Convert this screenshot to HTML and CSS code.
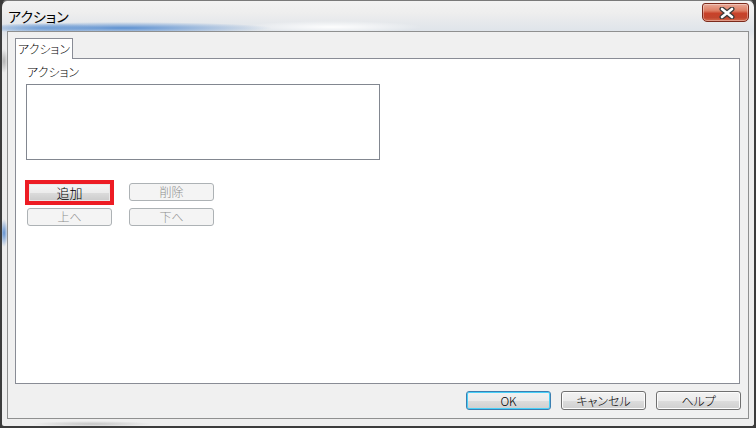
FILE: index.html
```html
<!DOCTYPE html>
<html lang="ja">
<head>
<meta charset="utf-8">
<title>アクション</title>
<link rel="stylesheet" href="styles.css">
</head>
<body>
<div class="window">
  <div class="titlebar">
    <span class="title">アクション</span>
    <button class="close" aria-label="閉じる">
      <svg width="16" height="12" viewBox="0 0 16 12">
        <path d="M3 2 L13 10 M13 2 L3 10" stroke="#3a3a3a" stroke-width="5" stroke-linecap="round" fill="none"/>
        <path d="M3 2 L13 10 M13 2 L3 10" stroke="#ffffff" stroke-width="2.6" stroke-linecap="round" fill="none"/>
      </svg>
    </button>
  </div>
  <div class="client">
    <div class="tabs"><div class="tab">アクション</div></div>
    <div class="panel">
      <div class="label">アクション</div>
      <div class="listbox"></div>
      <div class="row row-first">
        <div class="highlight"><button class="hbtn">追加</button></div>
        <button class="btn disabled gap-first">削除</button>
      </div>
      <div class="row row-second">
        <button class="btn disabled shift">上へ</button>
        <button class="btn disabled gap-second">下へ</button>
      </div>
    </div>
    <div class="footer">
      <button class="btn enabled default">OK</button>
      <button class="btn enabled">キャンセル</button>
      <button class="btn enabled">ヘルプ</button>
    </div>
  </div>
</div>
</body>
</html>
```

FILE: styles.css
```css
* { box-sizing: border-box; }
html, body { margin: 0; padding: 0; }
body {
  width: 756px;
  height: 428px;
  overflow: hidden;
  background: #3a3a3a;
  font-family: "Noto Sans CJK JP", "Noto Sans", sans-serif;
  font-size: 12px;
  font-weight: 300;
  font-feature-settings: "palt" 1;
  color: #000;
}
.window {
  width: 756px;
  height: 428px;
  border: 2px solid #3c3c3c;
  border-top: 1px solid #7a7a7a;
  border-radius: 7px 7px 4px 4px;
  padding: 0 5px 7px 5px;
  display: flex;
  flex-direction: column;
  background:
    radial-gradient(ellipse 150px 6px at 120px 27px, rgba(70,130,205,0.85), rgba(70,130,205,0) 100%),
    radial-gradient(ellipse 60px 5px at 40px 27px, rgba(90,145,210,0.6), rgba(90,145,210,0) 100%),
    radial-gradient(ellipse 90px 6px at 330px 26px, rgba(255,255,255,0.95), rgba(255,255,255,0) 100%),
    radial-gradient(ellipse 4px 14px at 2px 232px, rgba(60,120,200,0.8), rgba(60,120,200,0)),
    radial-gradient(ellipse 4px 12px at 2px 60px, rgba(120,120,120,0.5), rgba(120,120,120,0)),
    radial-gradient(ellipse 60px 3px at 90px 423px, rgba(180,180,180,0.7), rgba(180,180,180,0)),
    linear-gradient(to bottom, #f3f3f3 0, #eeeeee 12px, #e7e9ec 20px, #dfe4ea 30px, #ececec 40px, #eeeeee 100%);
}
.titlebar {
  height: 30px;
  display: flex;
  justify-content: space-between;
  align-items: flex-start;
  padding-left: 1px;
}
.title {
  margin-top: 6px;
  font-size: 14px;
  line-height: 18px;
  font-weight: 400;
  color: #000;
}
.close {
  margin-top: 2px;
  width: 47px;
  height: 19px;
  padding: 0;
  border: 1px solid #7b2a1c;
  border-radius: 3px 3px 5px 5px;
  background: linear-gradient(to bottom, #e9a997 0%, #dd7d63 40%, #c8422a 55%, #c2452d 80%, #d46a4c 100%);
  box-shadow: inset 0 0 0 1px rgba(255,255,255,0.35);
  display: flex;
  align-items: center;
  justify-content: center;
}
.close svg { display: block; margin-left: 2px; }
.client {
  flex: 1;
  border: 1px solid #8f9090;
  background: #f0f0f0;
  display: flex;
  flex-direction: column;
}
.tabs {
  margin-top: 6px;
  padding-left: 7px;
  display: flex;
  position: relative;
  z-index: 1;
}
.tab {
  width: 58px;
  height: 21px;
  border: 1px solid #898c95;
  border-bottom: none;
  background: #ffffff;
  margin-bottom: -1px;
  text-align: center;
  line-height: 19px;
  font-size: 12px;
}
.panel {
  height: 326px;
  margin: 0 8px 0 7px;
  border: 1px solid #898c95;
  background: #ffffff;
  padding-left: 10px;
}
.label {
  margin-top: 5px;
  margin-left: 1px;
  line-height: 16px;
  font-size: 12px;
}
.listbox {
  margin-top: 4px;
  width: 354px;
  height: 76px;
  border: 1px solid #828790;
  background: #fff;
}
.row {
  display: flex;
  align-items: flex-start;
}
.row-first { margin-top: 20px; margin-left: -1px; }
.row-second { margin-top: 3px; margin-left: -1px; }
.highlight {
  width: 89px;
  height: 25px;
  border: 4px solid #ed1c24;
  display: flex;
}
.hbtn {
  flex: 1;
  padding: 0;
  border: 1px solid #e8e8e8;
  background: linear-gradient(to bottom, #f4f4f4 0%, #ececec 50%, #dcdcdc 51%, #cdcdcd 100%);
  font-family: inherit;
  font-size: 13px;
  font-weight: 300;
  line-height: 15px;
  color: #000;
}
.btn {
  width: 85px;
  height: 19px;
  padding: 0;
  border-radius: 3px;
  font-family: inherit;
  font-size: 12px;
  font-weight: 300;
  line-height: 16px;
  font-feature-settings: "palt" 1;
}
.btn.disabled {
  height: 18px;
  border: 1px solid #adb2b5;
  background: #f4f4f4;
  color: #8d8d8d;
}
.gap-first { margin-left: 15px; margin-top: 3px; }
.shift { margin-left: 2px; }
.gap-second { margin-left: 17px; }
.footer {
  flex: 1;
  display: flex;
  justify-content: flex-end;
  align-items: flex-start;
  gap: 10px;
  padding: 7px 7px 0 0;
}
.btn.enabled {
  border: 1px solid #707070;
  background: linear-gradient(to bottom, #f2f2f2 0%, #ebebeb 50%, #dddddd 51%, #cfcfcf 100%);
  box-shadow: inset 0 0 0 1px #fcfcfc;
  color: #000;
}
.btn.enabled.default {
  border-color: #3c7fb1;
  box-shadow: inset 0 0 0 1px #48d0f8;
}
```
